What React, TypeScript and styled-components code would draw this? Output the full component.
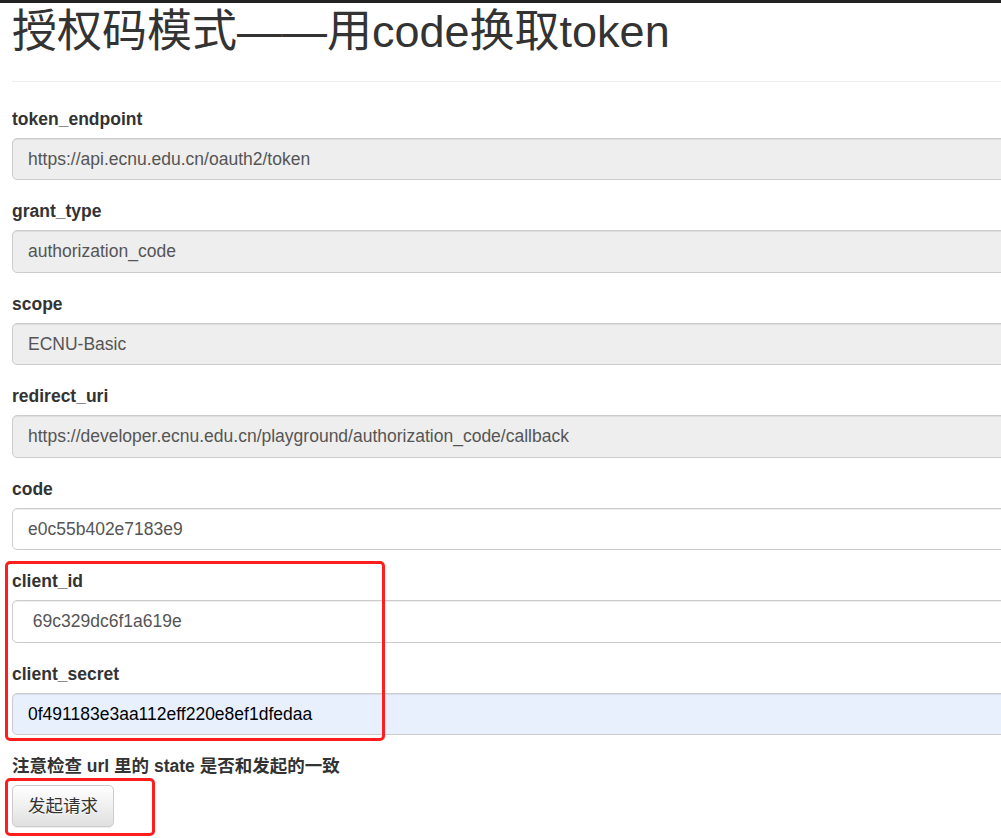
import React from "react";
import styled, { createGlobalStyle } from "styled-components";

const GlobalStyle = createGlobalStyle`
  html, body {
    margin: 0;
    padding: 0;
    overflow: hidden;
    background: #fff;
  }
  body {
    font-family: "Liberation Sans", Arial, "Noto Sans CJK SC", sans-serif;
    color: #333;
  }
`;

const Page = styled.div`
  position: relative;
  width: 1001px;
  height: 838px;
  overflow: hidden;
`;

const TopBar = styled.div`
  height: 3px;
  background: #222;
`;

const Container = styled.div`
  padding: 0 0 0 12px;
`;

const Title = styled.h1`
  margin: 4px 0 0;
  font-size: 45px;
  line-height: 49.5px;
  font-weight: 400;
  color: #333;
  white-space: nowrap;
  font-family: "Liberation Sans", Arial, "Noto Sans CJK SC", sans-serif;
`;

const Rule = styled.hr`
  margin: 24px 0 25px;
  border: 0;
  border-top: 1px solid #eee;
  width: 1100px;
`;

const Group = styled.div`
  margin-bottom: 18.75px;
`;

const Label = styled.label`
  display: block;
  font-size: 17.5px;
  line-height: 25px;
  font-weight: bold;
  margin-bottom: 6.25px;
  color: #333;
`;

const Input = styled.input<{ $tone?: "disabled" | "autofill" | "plain" }>`
  display: block;
  box-sizing: border-box;
  width: 1200px;
  height: 42.5px;
  padding: 7.5px 15px;
  font-family: "Liberation Sans", Arial, sans-serif;
  font-size: 17.5px;
  line-height: 25px;
  border: 1px solid #ccc;
  border-radius: 5px;
  box-shadow: inset 0 1px 1px rgba(0, 0, 0, 0.075);
  outline: none;
  color: ${(p) => (p.$tone === "autofill" ? "#000" : "#555")};
  background: ${(p) =>
    p.$tone === "disabled" ? "#eee" : p.$tone === "autofill" ? "#e8f0fe" : "#fff"};
  -webkit-text-fill-color: ${(p) => (p.$tone === "autofill" ? "#000" : "#555")};
  opacity: 1;
`;

const Button = styled.button`
  display: inline-block;
  box-sizing: border-box;
  height: 42px;
  padding: 7.5px 15px;
  font-family: "Liberation Sans", Arial, "Noto Sans CJK SC", sans-serif;
  font-size: 17.5px;
  line-height: 25px;
  color: #333;
  border: 1px solid #ccc;
  border-radius: 5px;
  background: linear-gradient(to bottom, #fff 0%, #e0e0e0 100%);
  text-shadow: 0 1px 0 #fff;
  box-shadow: inset 0 1px 0 rgba(255, 255, 255, 0.15), 0 1px 1px rgba(0, 0, 0, 0.075);
  cursor: pointer;
`;

const Mark = styled.div<{ $l: number; $t: number; $w: number; $h: number }>`
  position: absolute;
  left: ${(p) => p.$l}px;
  top: ${(p) => p.$t}px;
  width: ${(p) => p.$w}px;
  height: ${(p) => p.$h}px;
  box-sizing: border-box;
  border: 3.5px solid #ff1e1e;
  border-radius: 5px;
  pointer-events: none;
`;

type Field = { name: string; value: string; tone: "disabled" | "autofill" | "plain" };

const fields: Field[] = [
  { name: "token_endpoint", value: "https://api.ecnu.edu.cn/oauth2/token", tone: "disabled" },
  { name: "grant_type", value: "authorization_code", tone: "disabled" },
  { name: "scope", value: "ECNU-Basic", tone: "disabled" },
  {
    name: "redirect_uri",
    value: "https://developer.ecnu.edu.cn/playground/authorization_code/callback",
    tone: "disabled",
  },
  { name: "code", value: "e0c55b402e7183e9", tone: "plain" },
  { name: "client_id", value: " 69c329dc6f1a619e", tone: "plain" },
  { name: "client_secret", value: "0f491183e3aa112eff220e8ef1dfedaa", tone: "autofill" },
];

export default function App() {
  return (
    <Page>
      <GlobalStyle />
      <TopBar />
      <Container>
        <Title>授权码模式——用code换取token</Title>
        <Rule />
        {fields.map((f) => (
          <Group key={f.name}>
            <Label>{f.name}</Label>
            <Input
              $tone={f.tone}
              value={f.value}
              readOnly
              disabled={f.tone === "disabled"}
            />
          </Group>
        ))}
        <Label>注意检查 url 里的 state 是否和发起的一致</Label>
        <Button>发起请求</Button>
      </Container>
      <Mark $l={5} $t={561} $w={380} $h={180} />
      <Mark $l={5} $t={778} $w={150} $h={58} />
    </Page>
  );
}
